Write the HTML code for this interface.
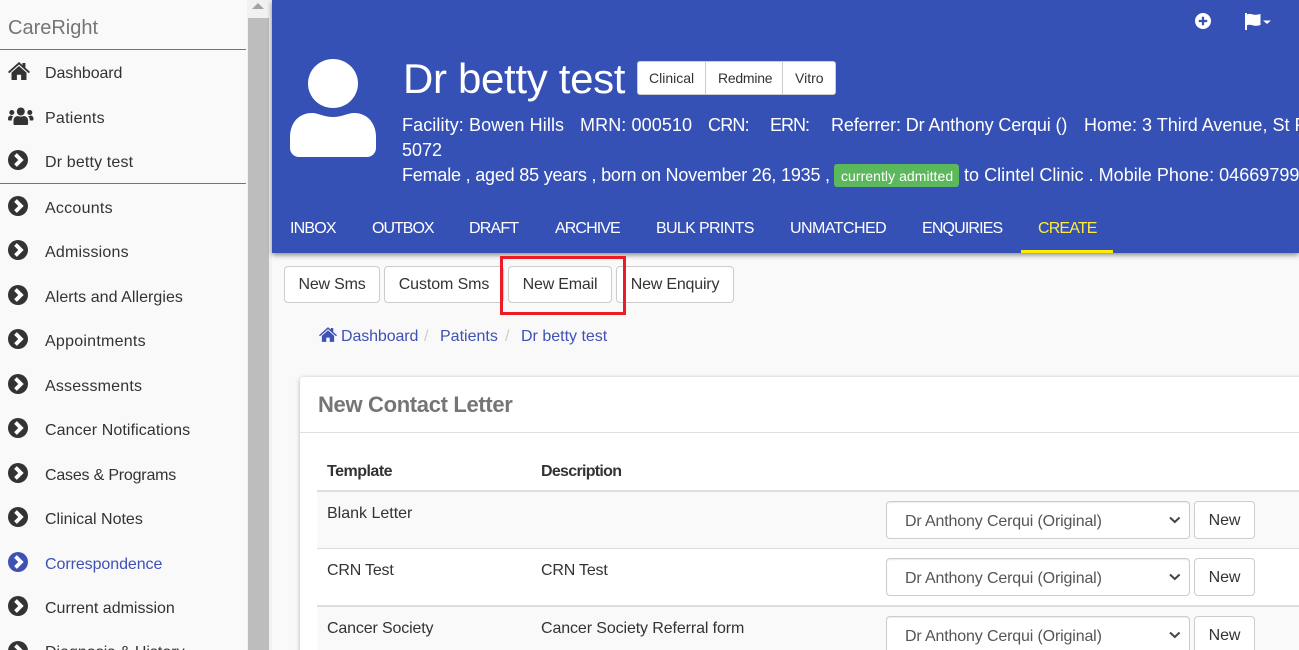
<!DOCTYPE html>
<html lang="en">
<head>
<meta charset="utf-8">
<title>CareRight</title>
<style>
html,body{margin:0;padding:0;width:1299px;height:650px;overflow:hidden;background:#f9f9f9;font-family:"Liberation Sans",sans-serif;color:#333}
#page{position:relative;width:1299px;height:650px;overflow:hidden}
.t{position:absolute;white-space:pre;line-height:20px;height:20px;font-size:16px}
.box{position:absolute;box-sizing:border-box}
svg{position:absolute;display:block}
.side{position:absolute;left:0;top:0;width:248px;height:650px;background:#f9f9f9}
.hr{position:absolute;left:0;width:246px;height:1px;background:#757575}
.h{color:#fff;font-size:18px;line-height:24px;height:24px}
.tab{color:#fff;font-size:16px}
.btn{position:absolute;box-sizing:border-box;background:#fff;border:1px solid #ccc;border-radius:4px;font-size:16px;text-align:center;color:#333;white-space:nowrap}
.sel{position:absolute;box-sizing:border-box;left:886px;width:304px;height:38px;background:#fff;border:1px solid #ccc;border-radius:4px;box-shadow:inset 0 1px 1px rgba(0,0,0,.075);font-size:16px;line-height:40px;color:#555;padding-left:18px;white-space:nowrap;letter-spacing:-.15px}
</style>
</head>
<body>
<div id="page">
  <div class="side"></div>
  <div class="t" style="left:8px;top:18px;font-size:20px;color:#757575">CareRight</div>
  <div class="hr" style="top:49px"></div>
  <div class="hr" style="top:183px"></div>

  <svg style="left:8px;top:62px" width="22" height="18" viewBox="0 0 22 18"><path fill="#333" d="M11 0 L14.4 3.1V1h3v4.8L22 9.9l-1.2 1.3L11 2.5 1.2 11.2 0 9.9Z"/><path fill="#333" d="M11 4 L18.5 10.6V18h-5.4v-5.2H8.9V18H3.500V10.600Z"/></svg>
  <div class="t" style="left:45px;top:64px;letter-spacing:-.11px">Dashboard</div>

  <svg style="left:8px;top:107px" width="26" height="18" viewBox="0 0 26 18" fill="#333"><circle cx="12.800" cy="4.500" r="4"/><path d="M5.500 17v-3.500c0-3 2.500-4.500 4.500-4.500 1 .8 4.600.8 5.600 0 2 0 4.500 1.500 4.500 4.500V17c0 .6-.5 1-1 1H6.500c-.6 0-1-.4-1-1Z"/><circle cx="3.800" cy="5.500" r="2.500"/><circle cx="21.800" cy="5.500" r="2.500"/><path d="M0 12c0-2.500 1.500-3.500 3-3.500.8.500 1.500.7 2.300.7-1 1-1.600 2.300-1.600 4.300H1c-.6 0-1-.5-1-1.500ZM25.500 12c0-2.500-1.500-3.500-3-3.500-.8.500-1.500.7-2.300.7 1 1 1.600 2.300 1.600 4.300h2.700c.6 0 1-.5 1-1.500Z"/></svg>
  <div class="t" style="left:45px;top:109px;letter-spacing:.25px">Patients</div>

  <div class="t" style="left:45px;top:153px;letter-spacing:.15px">Dr betty test</div>
  <div class="t" style="left:45px;top:199px;letter-spacing:.25px">Accounts</div>
  <div class="t" style="left:45px;top:243px;letter-spacing:.2px">Admissions</div>
  <div class="t" style="left:45px;top:288px;letter-spacing:.05px">Alerts and Allergies</div>
  <div class="t" style="left:45px;top:332px;letter-spacing:.25px">Appointments</div>
  <div class="t" style="left:45px;top:377px;letter-spacing:.18px">Assessments</div>
  <div class="t" style="left:45px;top:421px;letter-spacing:.1px">Cancer Notifications</div>
  <div class="t" style="left:45px;top:466px;letter-spacing:-.2px">Cases &amp; Programs</div>
  <div class="t" style="left:45px;top:510px">Clinical Notes</div>
  <div class="t" style="left:45px;top:555px;color:#3f51b5;letter-spacing:-.07px">Correspondence</div>
  <div class="t" style="left:45px;top:599px">Current admission</div>
  <div class="t" style="left:45px;top:643px">Diagnosis &amp; History</div>

  <svg style="left:0;top:0" width="40" height="660" viewBox="0 0 40 660">
    <defs><g id="cc"><circle r="10" fill="currentColor"/><path d="M-2.500-5.500 3 0-2.500 5.500" fill="none" stroke="#fff" stroke-width="3.800"/></g></defs>
    <use href="#cc" x="18" y="160" color="#333"/>
    <use href="#cc" x="18" y="206" color="#333"/>
    <use href="#cc" x="18" y="250" color="#333"/>
    <use href="#cc" x="18" y="295" color="#333"/>
    <use href="#cc" x="18" y="339" color="#333"/>
    <use href="#cc" x="18" y="384" color="#333"/>
    <use href="#cc" x="18" y="428" color="#333"/>
    <use href="#cc" x="18" y="473" color="#333"/>
    <use href="#cc" x="18" y="517" color="#333"/>
    <use href="#cc" x="18" y="562" color="#3f51b5"/>
    <use href="#cc" x="18" y="606" color="#333"/>
    <use href="#cc" x="18" y="651" color="#333"/>
  </svg>

  <div class="box" style="left:247px;top:0;width:25px;height:650px;background:#f1f1f1"></div>
  <div class="box" style="left:248px;top:18px;width:21px;height:632px;background:#bdbdbd"></div>
  <svg style="left:252px;top:2px" width="12" height="8" viewBox="0 0 12 8"><path d="M6 1 12 7H0Z" fill="#a3a3a3"/></svg>

  <!-- Header -->
  <div class="box" style="left:272px;top:0;width:1027px;height:253px;background:#3651b5;box-shadow:0 2px 5px rgba(0,0,0,.45)"></div>

  <svg style="left:1194px;top:12px" width="18" height="18" viewBox="0 0 18 18"><circle cx="9" cy="9" r="8" fill="#fff"/><path d="M9 4.800v8.400M4.800 9h8.400" stroke="#3651b5" stroke-width="2.200"/></svg>
  <svg style="left:1244px;top:12px" width="28" height="18" viewBox="0 0 28 18" fill="#fff"><rect x="1" y="1" width="2" height="17"/><path d="M3 2.500c3-1.500 5 0 7.500.3 2.500.2 4-.6 6-.8v11c-2 .6-4 1-6 .8-2.500-.4-4.500-1.700-7.500-.5Z"/><path d="M19 8.500h8l-4 3.500Z"/></svg>

  <svg style="left:290px;top:59px" width="86" height="98" viewBox="0 0 86 98" fill="#fff"><ellipse cx="43" cy="24.500" rx="25" ry="24.500"/><path d="M0 89V78C0 65 8 54 22 54 28 54 34 58 43 58 52 58 58 54 64 54 78 54 86 65 86 78V89C86 94 82 98 77 98H9C4 98 0 94 0 89Z"/></svg>

  <div class="t" style="left:403px;top:54px;height:50px;line-height:50px;font-size:42px;color:#fff;letter-spacing:-.33px">Dr betty test</div>

  <div class="box" style="left:637px;top:61px;width:199px;height:34px;background:#fff;border:1px solid #ccc;border-radius:3px"></div>
  <div class="box" style="left:705px;top:62px;width:1px;height:32px;background:#ccc"></div>
  <div class="box" style="left:782px;top:62px;width:1px;height:32px;background:#ccc"></div>
  <div class="t" style="left:649px;top:68px;font-size:14px">Clinical</div>
  <div class="t" style="left:718px;top:68px;font-size:14px;letter-spacing:-.25px">Redmine</div>
  <div class="t" style="left:795px;top:68px;font-size:14px">Vitro</div>

  <div class="t h" style="left:402px;top:113px;letter-spacing:.1px">Facility: Bowen Hills</div>
  <div class="t h" style="left:580px;top:113px;letter-spacing:.1px">MRN: 000510</div>
  <div class="t h" style="left:708px;top:113px;letter-spacing:-.8px">CRN:</div>
  <div class="t h" style="left:770px;top:113px;letter-spacing:-1px">ERN:</div>
  <div class="t h" style="left:831px;top:113px;letter-spacing:-.13px">Referrer: Dr Anthony Cerqui ()</div>
  <div class="t h" style="left:1084px;top:113px">Home: 3 Third Avenue, St Peters</div>
  <div class="t h" style="left:402px;top:138px">5072</div>
  <div class="t h" style="left:402px;top:163px;letter-spacing:-.2px">Female , aged 85 years , born on November 26, 1935 ,</div>
  <div class="box" style="left:834px;top:164px;width:125px;height:23px;background:#5cb85c;border-radius:3px"></div>
  <div class="t" style="left:841px;top:166px;font-size:14px;color:#fff;letter-spacing:.05px">currently admitted</div>
  <div class="t h" style="left:964px;top:163px;letter-spacing:.03px">to Clintel Clinic . Mobile Phone: 0466979900</div>

  <div class="t tab" style="left:290px;top:219px;letter-spacing:-.8px">INBOX</div>
  <div class="t tab" style="left:372px;top:219px;letter-spacing:-1px">OUTBOX</div>
  <div class="t tab" style="left:469px;top:219px;letter-spacing:-.8px">DRAFT</div>
  <div class="t tab" style="left:555px;top:219px;letter-spacing:-.9px">ARCHIVE</div>
  <div class="t tab" style="left:656px;top:219px;letter-spacing:-.65px">BULK PRINTS</div>
  <div class="t tab" style="left:790px;top:219px;letter-spacing:-.55px">UNMATCHED</div>
  <div class="t tab" style="left:922px;top:219px;letter-spacing:-.85px">ENQUIRIES</div>
  <div class="t tab" style="left:1038px;top:219px;color:#ffeb3b;letter-spacing:-.85px">CREATE</div>
  <div class="box" style="left:1021px;top:250px;width:92px;height:3px;background:#ffea00"></div>

  <!-- Action buttons -->
  <div class="btn" style="left:284px;top:266px;width:96px;height:37px;line-height:36px;letter-spacing:-.2px">New Sms</div>
  <div class="btn" style="left:384px;top:266px;width:120px;height:37px;line-height:36px;letter-spacing:-.1px">Custom Sms</div>
  <div class="btn" style="left:508px;top:266px;width:104px;height:37px;line-height:36px;letter-spacing:-.2px">New Email</div>
  <div class="btn" style="left:616px;top:266px;width:118px;height:37px;line-height:36px;letter-spacing:-.2px">New Enquiry</div>
  <div class="box" style="left:500px;top:256px;width:126px;height:59px;border:3px solid #ed1c24"></div>

  <!-- Breadcrumb -->
  <svg style="left:319px;top:327px" width="18" height="15" viewBox="0 0 22 18"><path fill="#3f51b5" d="M11 0 L14.4 3.1V1h3v4.8L22 9.900l-1.200 1.300L11 2.500 1.200 11.200 0 9.900Z"/><path fill="#3f51b5" d="M11 4 L18.500 10.600V18h-5.400v-5.200H8.900V18H3.500V10.600Z"/></svg>
  <div class="t" style="left:341px;top:327px;color:#3f51b5;letter-spacing:-.11px">Dashboard</div>
  <div class="t" style="left:424px;top:327px;color:#ccc">/</div>
  <div class="t" style="left:440px;top:327px;color:#3f51b5">Patients</div>
  <div class="t" style="left:505px;top:327px;color:#ccc">/</div>
  <div class="t" style="left:521px;top:327px;color:#3f51b5">Dr betty test</div>

  <!-- Card -->
  <div class="box" style="left:300px;top:377px;width:1010px;height:290px;background:#fff;border-radius:3px;box-shadow:0 1px 4px rgba(0,0,0,.3)"></div>
  <div class="t" style="left:318px;top:393px;height:24px;line-height:24px;font-size:22px;font-weight:700;color:#757575;letter-spacing:-.33px">New Contact Letter</div>
  <div class="box" style="left:300px;top:432px;width:999px;height:1px;background:#e0e0e0"></div>

  <div class="t" style="left:327px;top:462px;font-weight:700;letter-spacing:-.5px">Template</div>
  <div class="t" style="left:541px;top:462px;font-weight:700;letter-spacing:-.7px">Description</div>
  <div class="box" style="left:317px;top:490px;width:982px;height:2px;background:#ddd"></div>
  <div class="box" style="left:317px;top:492px;width:982px;height:56px;background:#f9f9f9"></div>
  <div class="box" style="left:317px;top:548px;width:982px;height:1px;background:#ddd"></div>
  <div class="box" style="left:317px;top:605px;width:982px;height:2px;background:#ddd"></div>
  <div class="box" style="left:317px;top:607px;width:982px;height:43px;background:#f9f9f9"></div>

  <div class="t" style="left:327px;top:504px">Blank Letter</div>
  <div class="t" style="left:327px;top:561px;letter-spacing:-.2px">CRN Test</div>
  <div class="t" style="left:541px;top:561px;letter-spacing:-.2px">CRN Test</div>
  <div class="t" style="left:327px;top:619px;letter-spacing:-.15px">Cancer Society</div>
  <div class="t" style="left:541px;top:619px;letter-spacing:-.11px">Cancer Society Referral form</div>

  <div class="sel" style="top:501px">Dr Anthony Cerqui (Original)</div>
  <div class="sel" style="top:558px">Dr Anthony Cerqui (Original)</div>
  <div class="sel" style="top:616px">Dr Anthony Cerqui (Original)</div>
  <svg style="left:1168px;top:516px" width="14" height="8" viewBox="0 0 14 8"><path d="M2 1.500 6.800 6 11.600 1.500" fill="none" stroke="#444" stroke-width="2"/></svg>
  <svg style="left:1168px;top:573px" width="14" height="8" viewBox="0 0 14 8"><path d="M2 1.500 6.800 6 11.600 1.500" fill="none" stroke="#444" stroke-width="2"/></svg>
  <svg style="left:1168px;top:631px" width="14" height="8" viewBox="0 0 14 8"><path d="M2 1.500 6.800 6 11.600 1.500" fill="none" stroke="#444" stroke-width="2"/></svg>
  <div class="btn" style="left:1194px;top:501px;width:61px;height:38px;line-height:38px;letter-spacing:-.1px">New</div>
  <div class="btn" style="left:1194px;top:558px;width:61px;height:38px;line-height:38px;letter-spacing:-.1px">New</div>
  <div class="btn" style="left:1194px;top:616px;width:61px;height:38px;line-height:38px;letter-spacing:-.1px">New</div>
</div>
</body>
</html>
